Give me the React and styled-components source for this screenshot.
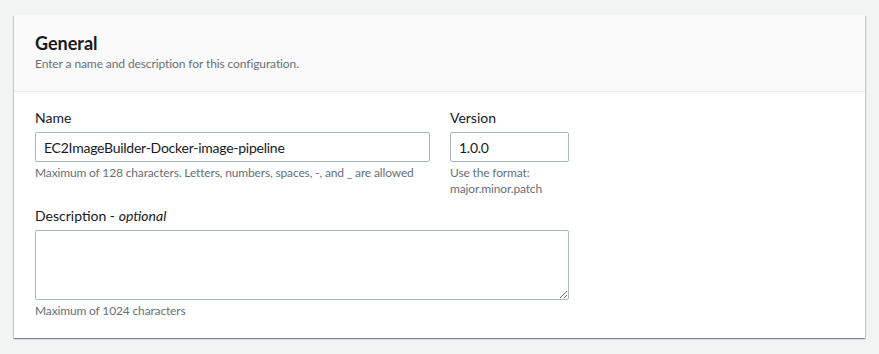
import styled, { createGlobalStyle } from "styled-components"

const GlobalStyle = createGlobalStyle`
  html, body {
    margin: 0;
    padding: 0;
    background: #f2f3f3;
    font-family: Lato, "Liberation Sans", Arial, sans-serif;
    color: #16191f;
  }
`

export default function App() {
  return (
    <Page>
      <GlobalStyle />
      <Card>
        <CardHeader>
          <Title>General</Title>
          <Subtitle>Enter a name and description for this configuration.</Subtitle>
        </CardHeader>

        <CardBody>
          <Row>
            <Field width="395px">
              <Label>Name</Label>
              <Input defaultValue="EC2ImageBuilder-Docker-image-pipeline" />
              <Hint>Maximum of 128 characters. Letters, numbers, spaces, -, and _ are allowed</Hint>
            </Field>
            <Field width="119px">
              <Label>Version</Label>
              <Input defaultValue="1.0.0" />
              <Hint>Use the format:<br />major.minor.patch</Hint>
            </Field>
          </Row>

          <Field width="534px">
            <Label>Description - <em>optional</em></Label>
            <TextArea />
            <Hint>Maximum of 1024 characters</Hint>
          </Field>
        </CardBody>
      </Card>
    </Page>
  )
}

const Page = styled.div`
  padding: 15px 14px 16px 14px;
`

const Card = styled.section`
  background: #fff;
  box-shadow: 0 1px 1px 0 rgba(0, 28, 36, 0.3),
    1px 1px 1px 0 rgba(0, 28, 36, 0.15),
    -1px 1px 1px 0 rgba(0, 28, 36, 0.15);
`

const CardHeader = styled.header`
  background: #fafafa;
  border-bottom: 1px solid #eaeded;
  padding: 17px 20px 19px 21px;
`

const Title = styled.h2`
  margin: 0;
  font-size: 18px;
  line-height: 22px;
  font-weight: 700;
  color: #16191f;
`

const Subtitle = styled.p`
  margin: 2px 0 0;
  font-size: 12px;
  line-height: 16px;
  color: #687078;
  letter-spacing: -0.1px;
`

const CardBody = styled.div`
  padding: 16px 20px 19px 21px;
  display: flex;
  flex-direction: column;
  gap: 9px;
`

const Row = styled.div`
  display: flex;
  gap: 20px;
`

const Field = styled.div`
  width: ${(p) => p.width};
  display: flex;
  flex-direction: column;
`

const Label = styled.label`
  font-size: 14px;
  line-height: 20px;
  color: #16191f;
  margin-bottom: 4px;
  em {
    font-style: italic;
  }
`

const Input = styled.input`
  box-sizing: border-box;
  height: 30px;
  width: 100%;
  border: 1px solid #aab7b8;
  border-radius: 2px;
  padding: 4px 8px;
  font-family: inherit;
  font-size: 14px;
  letter-spacing: -0.25px;
  color: #16191f;
  background: #fff;
  outline: none;
`

const TextArea = styled.textarea`
  box-sizing: border-box;
  height: 70px;
  width: 100%;
  border: 1px solid #aab7b8;
  border-radius: 2px;
  padding: 4px 8px;
  font-family: inherit;
  font-size: 14px;
  resize: both;
  display: block;
  outline: none;
`

const Hint = styled.div`
  margin-top: 3px;
  font-size: 12px;
  line-height: 16px;
  letter-spacing: -0.15px;
  color: #687078;
`
